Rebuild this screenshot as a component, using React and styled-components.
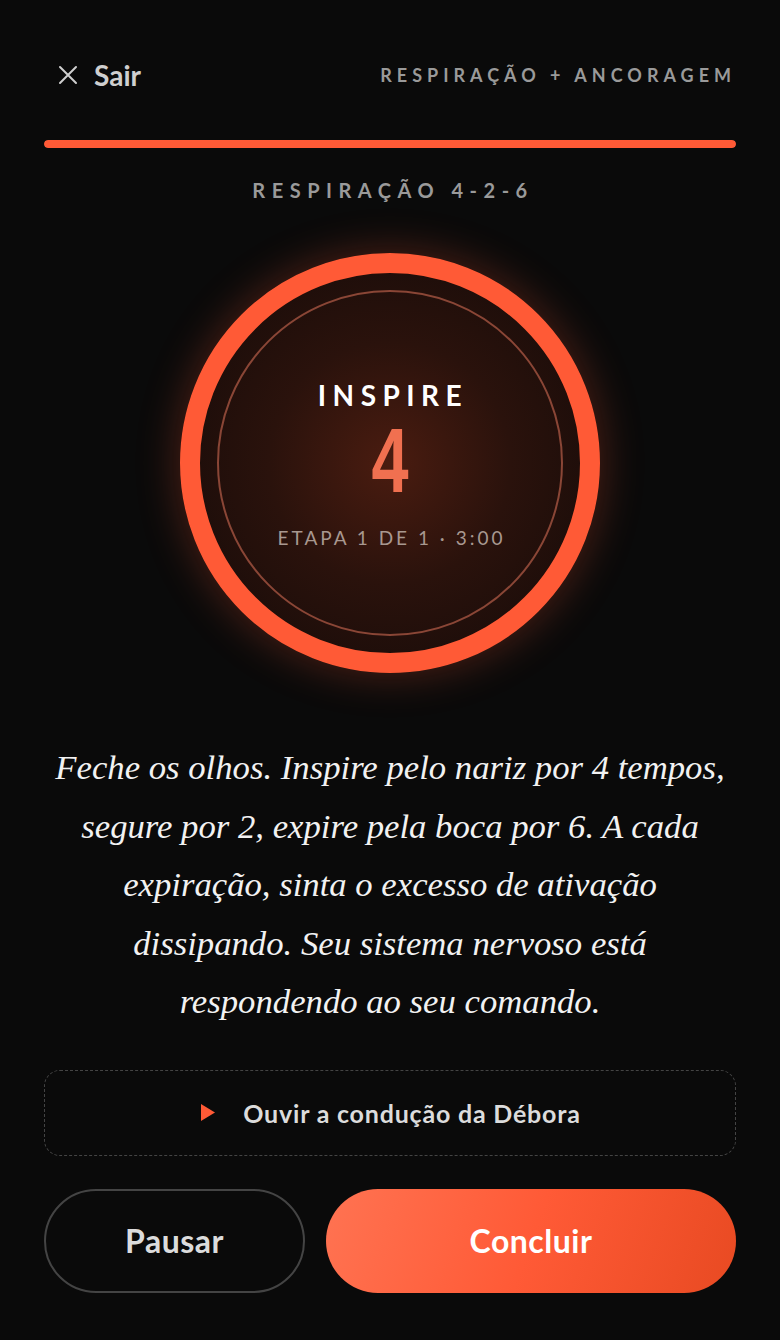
import React from "react";
import styled, { createGlobalStyle } from "styled-components";

const Global = createGlobalStyle`
  html, body {
    margin: 0;
    padding: 0;
    background: #0a0a0a;
  }
  body {
    font-family: Lato, "Open Sans", sans-serif;
    color: #ddd;
  }
`;

const Page = styled.div`
  width: 780px;
  min-height: 1340px;
  box-sizing: border-box;
  padding: 56px 44px 0;
  display: flex;
  flex-direction: column;
  background: #0a0a0a;
`;

const Header = styled.div`
  display: flex;
  align-items: center;
  justify-content: space-between;
  height: 38px;
  padding: 0 2px 0 14px;
`;

const Exit = styled.button`
  display: flex;
  align-items: center;
  gap: 16px;
  background: none;
  border: 0;
  padding: 0;
  color: #cfcfcf;
  font-family: Lato, sans-serif;
  font-weight: 700;
  font-size: 28px;
  cursor: pointer;
`;

const Track = styled.div`
  text-transform: uppercase;
  color: #9a9a9a;
  font-size: 18px;
  font-weight: 700;
  letter-spacing: 5px;
  margin-right: -2px;
`;

const Progress = styled.div`
  margin-top: 46px;
  height: 8px;
  border-radius: 4px;
  background: #222;
  overflow: hidden;
`;

const ProgressFill = styled.div`
  height: 100%;
  background: #ff5a36;
  border-radius: 4px;
`;

const Exercise = styled.div`
  margin-top: 30px;
  text-align: center;
  color: #9a9a9a;
  font-size: 20px;
  font-weight: 700;
  letter-spacing: 6.5px;
  padding-left: 6px;
`;

const Stage = styled.div`
  display: flex;
  justify-content: center;
  margin-top: 51px;
`;

const Ring = styled.div`
  width: 420px;
  height: 420px;
  box-sizing: border-box;
  border-radius: 50%;
  border: 20px solid #ff5a36;
  box-shadow: 0 0 44px rgba(255, 90, 54, 0.3);
  background: radial-gradient(circle at 50% 50%, #4a1c10 0%, #2a120c 45%, #140a08 100%);
  display: flex;
  align-items: center;
  justify-content: center;
`;

const InnerRing = styled.div`
  width: 346px;
  height: 346px;
  box-sizing: border-box;
  border-radius: 50%;
  border: 2px solid #8a4636;
  padding-top: 86px;
  display: flex;
  flex-direction: column;
  align-items: center;
`;

const Phase = styled.div`
  color: #fff;
  font-size: 28px;
  line-height: 34px;
  font-weight: 700;
  letter-spacing: 6.5px;
  padding-left: 6px;
`;

const Count = styled.div`
  color: #f07050;
  font-family: "Liberation Sans", Arial, sans-serif;
  font-weight: 700;
  font-size: 90px;
  line-height: 1;
  margin-top: 4px;
  transform: scaleX(0.74);
`;

const StepInfo = styled.div`
  margin-top: 20px;
  color: #a89890;
  font-size: 19px;
  line-height: 24px;
  letter-spacing: 3px;
  padding-left: 3px;
`;

const Guide = styled.p`
  margin: 66px 6px 0;
  text-align: center;
  font-family: "Liberation Serif", "DejaVu Serif", serif;
  font-style: italic;
  font-size: 34.7px;
  line-height: 58.5px;
  color: #f2f2f2;
`;

const Listen = styled.button`
  margin-top: 38px;
  height: 86px;
  border: 1.5px dashed #444;
  border-radius: 16px;
  background: transparent;
  display: flex;
  align-items: center;
  justify-content: center;
  gap: 28px;
  color: #dcdcdc;
  font-family: Lato, sans-serif;
  font-weight: 700;
  font-size: 25px;
  letter-spacing: 0.8px;
  cursor: pointer;
  padding-right: 4px;
`;

const Actions = styled.div`
  display: flex;
  gap: 21px;
  margin-top: 33px;
`;

const Pill = styled.button`
  flex: ${(p) => (p.$primary ? "0 0 410px" : "1")};
  height: 104px;
  border-radius: 52px;
  box-sizing: border-box;
  font-family: Lato, sans-serif;
  font-weight: 700;
  font-size: 32px;
  letter-spacing: 0.5px;
  cursor: pointer;
  border: ${(p) => (p.$primary ? "0" : "2px solid #444")};
  color: ${(p) => (p.$primary ? "#fff" : "#dcdcdc")};
  background: ${(p) =>
    p.$primary ? "linear-gradient(110deg, #ff7352 0%, #ff5a36 50%, #e84a22 100%)" : "transparent"};
`;

const CloseIcon = () => (
  <svg width="20" height="20" viewBox="0 0 20 20" fill="none" stroke="#cfcfcf" strokeWidth="2" strokeLinecap="round">
    <path d="M2 2L18 18M18 2L2 18" />
  </svg>
);

const PlayIcon = () => (
  <svg width="14" height="17" viewBox="0 0 14 17">
    <path d="M0 0L14 8.5L0 17Z" fill="#ff5a36" />
  </svg>
);

export default function App() {
  return (
    <>
      <Global />
      <Page>
        <Header>
          <Exit>
            <CloseIcon />
            Sair
          </Exit>
          <Track>Respiração + Ancoragem</Track>
        </Header>
        <Progress>
          <ProgressFill style={{ width: "100%" }} />
        </Progress>
        <Exercise>RESPIRAÇÃO 4-2-6</Exercise>
        <Stage>
          <Ring>
            <InnerRing>
              <Phase>INSPIRE</Phase>
              <Count>4</Count>
              <StepInfo>ETAPA 1 DE 1 · 3:00</StepInfo>
            </InnerRing>
          </Ring>
        </Stage>
        <Guide>
          Feche os olhos. Inspire pelo nariz por 4 tempos, segure por 2, expire pela boca por 6. A cada
          expiração, sinta o excesso de ativação dissipando. Seu sistema nervoso está respondendo ao seu
          comando.
        </Guide>
        <Listen>
          <PlayIcon />
          Ouvir a condução da Débora
        </Listen>
        <Actions>
          <Pill>Pausar</Pill>
          <Pill $primary>Concluir</Pill>
        </Actions>
      </Page>
    </>
  );
}
